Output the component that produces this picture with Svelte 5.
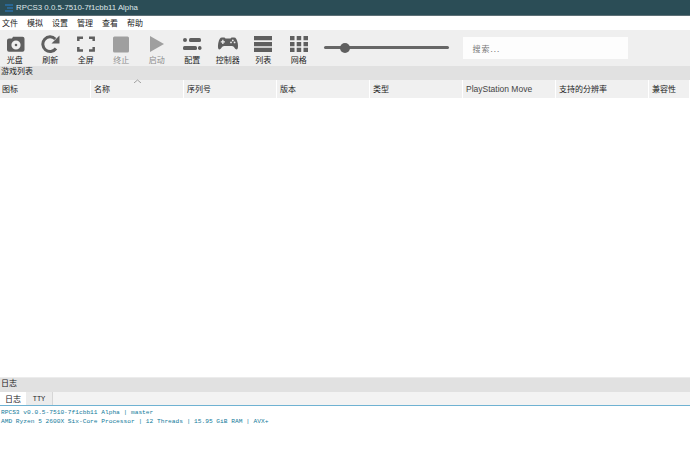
<script>
  const menus = ['文件', '模拟', '设置', '管理', '查看', '帮助'];
  const columns = [
    { label: '图标', width: 91 },
    { label: '名称', width: 93 },
    { label: '序列号', width: 93 },
    { label: '版本', width: 93 },
    { label: '类型', width: 93 },
    { label: 'PlayStation Move', width: 93 },
    { label: '支持的分辨率', width: 93 },
    { label: '兼容性', width: 41 }
  ];
</script>

<div class="window">
  <header class="titlebar">
    <svg class="logo" viewBox="0 0 12 10" width="12" height="10">
      <path d="M1 2h8M3 5h6M1 8h8" stroke="#2a6fa8" stroke-width="1.400" fill="none" />
    </svg>
    <span>RPCS3 0.0.5-7510-7f1cbb11 Alpha</span>
  </header>

  <nav class="menubar">
    {#each menus as m}<span>{m}</span>{/each}
  </nav>

  <div class="toolbar">
    <div class="tool">
      <svg viewBox="0 0 20 18" width="20" height="18">
        <path fill="#5f5f5f" fill-rule="evenodd" d="M4 3.500h3l1-1.800h9.500a2 2 0 0 1 2 2v11a2 2 0 0 1-2 2H4a2 2 0 0 1-2-2V5.500a2 2 0 0 1 2-2zM11 5.400a4.600 4.600 0 1 0 0 9.200 4.600 4.600 0 0 0 0-9.200zM11 8.700a1.300 1.300 0 1 1 0 2.600 1.300 1.300 0 0 1 0-2.600z" />
      </svg>
      <span>光盘</span>
    </div>
    <div class="tool">
      <svg viewBox="0 0 20 18" width="20" height="18">
        <path fill="none" stroke="#5f5f5f" stroke-width="3" d="M16 13.500A7.300 7.300 0 1 1 15.300 4" />
        <path fill="#5f5f5f" d="M19.500 0.500v8h-8z" />
      </svg>
      <span>刷新</span>
    </div>
    <div class="tool">
      <svg viewBox="0 0 18 18" width="18" height="18">
        <path fill="none" stroke="#5f5f5f" stroke-width="2.500" d="M1.300 6V2.800H6M12 2.800h4.700V6M16.700 12v3.500H12M6 15.500H1.300V12" />
      </svg>
      <span>全屏</span>
    </div>
    <div class="tool off">
      <svg viewBox="0 0 18 18" width="18" height="18"><rect width="16" height="16" x="1" y="1.500" rx="1.500" fill="#9f9f9f" /></svg>
      <span>终止</span>
    </div>
    <div class="tool off">
      <svg viewBox="0 0 18 18" width="18" height="18"><path d="M2 1l14 8-14 8z" fill="#9f9f9f" /></svg>
      <span>启动</span>
    </div>
    <div class="tool">
      <svg viewBox="0 0 20 18" width="20" height="18">
        <rect x="1" y="3" width="4" height="4" rx="2" fill="#5f5f5f" />
        <rect x="7" y="3" width="12" height="4" rx="1.500" fill="#5f5f5f" />
        <rect x="1" y="11" width="14" height="4" rx="1.500" fill="#5f5f5f" />
        <rect x="16" y="11" width="3.500" height="4" rx="1.700" fill="#5f5f5f" />
      </svg>
      <span>配置</span>
    </div>
    <div class="tool">
      <svg viewBox="0 0 22 18" width="22" height="18">
        <path fill="#5f5f5f" fill-rule="evenodd" d="M5 2.500h2.500l1 1h5l1-1H17c2 0 3 2 3.700 5.500.6 3.300.4 6.500-1 6.500-1.700 0-2.700-3.500-4.700-3.500H7c-2 0-3 3.500-4.700 3.500-1.400 0-1.600-3.200-1-6.500C2 4.500 3 2.500 5 2.500zM5.200 4.800v1.400H3.800v1.300h1.400v1.400h1.300V7.500h1.400V6.200H6.500V4.800zM15.800 4.500a.9.9 0 1 0 0 1.800.9.900 0 0 0 0-1.800zM17.600 6.500a.9.9 0 1 0 0 1.800.9.900 0 0 0 0-1.800zM14 6.500a.9.900 0 1 0 0 1.800.9.900 0 0 0 0-1.800z" />
      </svg>
      <span>控制器</span>
    </div>
    <div class="tool">
      <svg viewBox="0 0 18 18" width="18" height="18">
        <path fill="#5f5f5f" d="M0 1h18v4.300H0zM0 6.900h18v4.300H0zM0 12.700h18V17H0z" />
      </svg>
      <span>列表</span>
    </div>
    <div class="tool">
      <svg viewBox="0 0 18 18" width="18" height="18">
        <path fill="#5f5f5f" d="M0 1h4.500v4.300H0zM6.700 1h4.500v4.300H6.700zM13.500 1H18v4.300h-4.500zM0 6.900h4.500v4.300H0zM6.700 6.900h4.500v4.300H6.700zM13.500 6.900H18v4.300h-4.500zM0 12.700h4.500V17H0zM6.700 12.700h4.500V17H6.700zM13.500 12.700H18V17h-4.500z" />
      </svg>
      <span>网格</span>
    </div>

    <div class="slider"><i></i></div>
    <div class="search">搜索...</div>
  </div>

  <div class="dock-title">游戏列表</div>

  <div class="table-head">
    {#each columns as c, i}
      <div class="col" style="width: {c.width}px">
        {c.label}
        {#if i === 1}<svg class="sort" viewBox="0 0 7 4" width="7" height="4"><path d="M0 4l3.500-3L7 4" fill="none" stroke="#8a8a8a" stroke-width=".8" /></svg>{/if}
      </div>
    {/each}
  </div>

  <main class="table-body"></main>

  <div class="log-title">日志</div>
  <div class="tabs">
    <span class="tab active">日志</span>
    <span class="tab">TTY</span>
  </div>
  <div class="log">
    <div>RPCS3 v0.0.5-7510-7f1cbb11 Alpha | master</div>
    <div>AMD Ryzen 5 2600X Six-Core Processor | 12 Threads | 15.95 GiB RAM | AVX+</div>
  </div>
</div>

<style>
  :global(body) {
    margin: 0;
    background: #fff;
  }
  .window {
    width: 690px;
    height: 456px;
    display: flex;
    flex-direction: column;
    overflow: hidden;
    font-family: "Noto Sans CJK SC", "Liberation Sans", sans-serif;
    font-size: 8px;
    color: #222;
  }
  .titlebar {
    height: 16px;
    flex: none;
    background: #2b4d56;
    color: #dfe6e8;
    display: flex;
    align-items: center;
    padding-left: 4px;
    font-family: "Liberation Sans", sans-serif;
    font-size: 7.850px;
    box-sizing: border-box;
    border-bottom: 1px solid #5d7076;
  }
  .menubar {
    height: 14px;
    flex: none;
    display: flex;
    align-items: center;
    gap: 9px;
    padding: 0 0 1px 2px;
    box-sizing: border-box;
  }
  .menubar span {
    width: 16px;
    white-space: nowrap;
  }
  .toolbar {
    height: 36px;
    flex: none;
    background: #efefef;
    display: flex;
    align-items: flex-start;
  }
  .tool {
    width: 35.500px;
    padding-top: 5px;
    display: flex;
    flex-direction: column;
    align-items: center;
    line-height: 11px;
    white-space: nowrap;
  }
  .tool:first-child {
    margin-left: -3px;
  }
  .tool svg {
    height: 18px;
    display: block;
    margin-bottom: 1px;
  }
  .off {
    color: #8c8c8c;
  }
  .slider {
    width: 125px;
    height: 3px;
    margin: 16px 0 0 7px;
    background: #666;
    border-radius: 2px;
    position: relative;
  }
  .slider i {
    position: absolute;
    left: 16px;
    top: -3px;
    width: 10px;
    height: 10px;
    border-radius: 50%;
    background: #5f5f5f;
  }
  .search {
    width: 165px;
    height: 22px;
    margin: 7px 0 0 14px;
    padding-left: 10px;
    box-sizing: border-box;
    background: #fdfdfd;
    color: #777;
    display: flex;
    align-items: center;
    letter-spacing: 1px;
  }
  .dock-title {
    height: 14px;
    flex: none;
    background: #e1e1e1;
    line-height: 10px;
    padding-left: 1px;
  }
  .table-head {
    height: 18px;
    flex: none;
    display: flex;
  }
  .col {
    position: relative;
    flex: none;
    height: 18px;
    background: #f0f0f0;
    border-right: 1px solid #fff;
    box-sizing: border-box;
    padding-left: 2px;
    line-height: 18px;
    white-space: nowrap;
  }
  .col:not(:first-child) {
    padding-left: 3px;
  }
  .col:nth-child(6) {
    font-family: "Liberation Sans", sans-serif;
    color: #444;
    font-size: 8.500px;
  }
  .sort {
    position: absolute;
    left: 43px;
    top: -1px;
  }
  .table-body {
    flex: 1;
    background: #fff;
  }
  .log-title {
    height: 15px;
    flex: none;
    box-sizing: border-box;
    background: #e1e1e1;
    line-height: 10px;
    padding-left: 1px;
    border-top: 1px solid #ececec;
  }
  .tabs {
    height: 13px;
    flex: none;
    display: flex;
    background: #f3f3f3;
  }
  .tab {
    height: 13px;
    line-height: 13px;
    text-align: center;
  }
  .tab:first-child {
    width: 26px;
    background: #fff;
  }
  .tab:last-child {
    width: 26px;
    background: #ececec;
    border-right: 1px solid #d6d6d6;
    font-family: "Liberation Mono", monospace;
    font-size: 7px;
    line-height: 15px;
  }
  .log {
    flex: none;
    height: 51px;
    border-top: 1px solid #6fb2d2;
    box-sizing: border-box;
    padding: 2px 0 0 1px;
    font-family: "Liberation Mono", monospace;
    font-size: 6.200px;
    line-height: 9px;
    color: #117a9a;
    white-space: nowrap;
  }
</style>
